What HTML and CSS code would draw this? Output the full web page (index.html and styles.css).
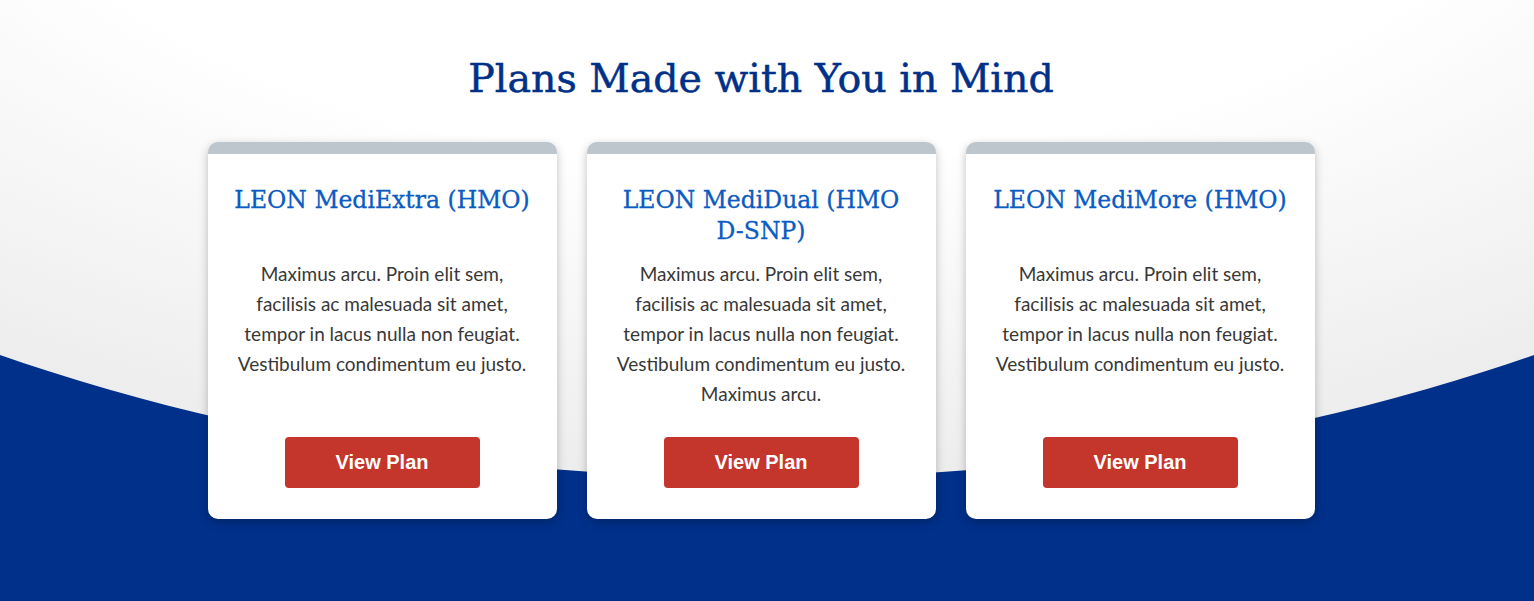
FILE: index.html
```html
<!DOCTYPE html>
<html lang="en">
<head>
    <meta charset="UTF-8">
    <meta name="viewport" content="width=device-width, initial-scale=1.0">
    <title>Plans</title>
    <link rel="stylesheet" href="styles.css">
</head>
<body>
    <section class="plans">
        <h2 class="plans-title">Plans Made with You in Mind</h2>
        <div class="plan-list">
            <div class="plan-card">
                <h3 class="plan-name">LEON MediExtra (HMO)</h3>
                <p class="plan-text">Maximus arcu. Proin elit sem, facilisis ac malesuada sit amet, tempor in lacus nulla non feugiat. Vestibulum condimentum eu justo.</p>
                <a class="plan-btn" href="#">View Plan</a>
            </div>
            <div class="plan-card">
                <h3 class="plan-name">LEON MediDual (HMO D-SNP)</h3>
                <p class="plan-text">Maximus arcu. Proin elit sem, facilisis ac malesuada sit amet, tempor in lacus nulla non feugiat. Vestibulum condimentum eu justo. Maximus arcu.</p>
                <a class="plan-btn" href="#">View Plan</a>
            </div>
            <div class="plan-card">
                <h3 class="plan-name">LEON MediMore (HMO)</h3>
                <p class="plan-text">Maximus arcu. Proin elit sem, facilisis ac malesuada sit amet, tempor in lacus nulla non feugiat. Vestibulum condimentum eu justo.</p>
                <a class="plan-btn" href="#">View Plan</a>
            </div>
        </div>
    </section>
</body>
</html>
```

FILE: styles.css
```css
body, html {
    margin: 0;
    padding: 0;
    font-family: Lato, Arial, sans-serif;
}
.plans {
    position: relative;
    overflow: hidden;
    height: 601px;
    box-sizing: border-box;
    padding: 54px 12px 0 0;
    background-color: #00308a;
}
/* white wave sitting on top of the blue band */
.plans::before {
    content: "";
    position: absolute;
    left: -633px;
    top: -1028px;
    width: 2800px;
    height: 1506px;
    border-radius: 50%;
    background: radial-gradient(ellipse closest-side at 50% 50%, #fff 58%, #ededed 100%);
}
.plans-title {
    position: relative;
    margin: 0 0 40px;
    text-align: center;
    font-family: "DejaVu Serif", serif;
    font-weight: normal;
    font-size: 39.5px;
    line-height: 48px;
    color: #003087;
    -webkit-text-stroke: 0.5px #003087;
}
.plan-list {
    position: relative;
    display: flex;
    justify-content: center;
    gap: 30px;
}
.plan-card {
    width: 349px;
    box-sizing: border-box;
    display: flex;
    flex-direction: column;
    padding: 31px 25px 31px;
    background-color: white;
    border-top: 12px solid #bec6cd;
    border-radius: 10px;
    box-shadow: 0 3px 10px rgba(0, 0, 0, 0.25);
    text-align: center;
}
.plan-name {
    margin: 0 0 12px;
    min-height: 62px;
    font-family: "DejaVu Serif", serif;
    font-weight: normal;
    font-size: 23.5px;
    line-height: 31px;
    color: #0a5bc2;
    -webkit-text-stroke: 0.3px #0a5bc2;
}
.plan-text {
    margin: 0 0 28px;
    font-size: 19px;
    line-height: 30px;
    color: #383838;
}
.plan-btn {
    margin-top: auto;
    align-self: center;
    width: 195px;
    height: 51px;
    line-height: 51px;
    border-radius: 4px;
    background-color: #c4352c;
    color: white;
    text-decoration: none;
    font-family: "Liberation Sans", Arial, sans-serif;
    font-weight: bold;
    font-size: 20px;
}
```
